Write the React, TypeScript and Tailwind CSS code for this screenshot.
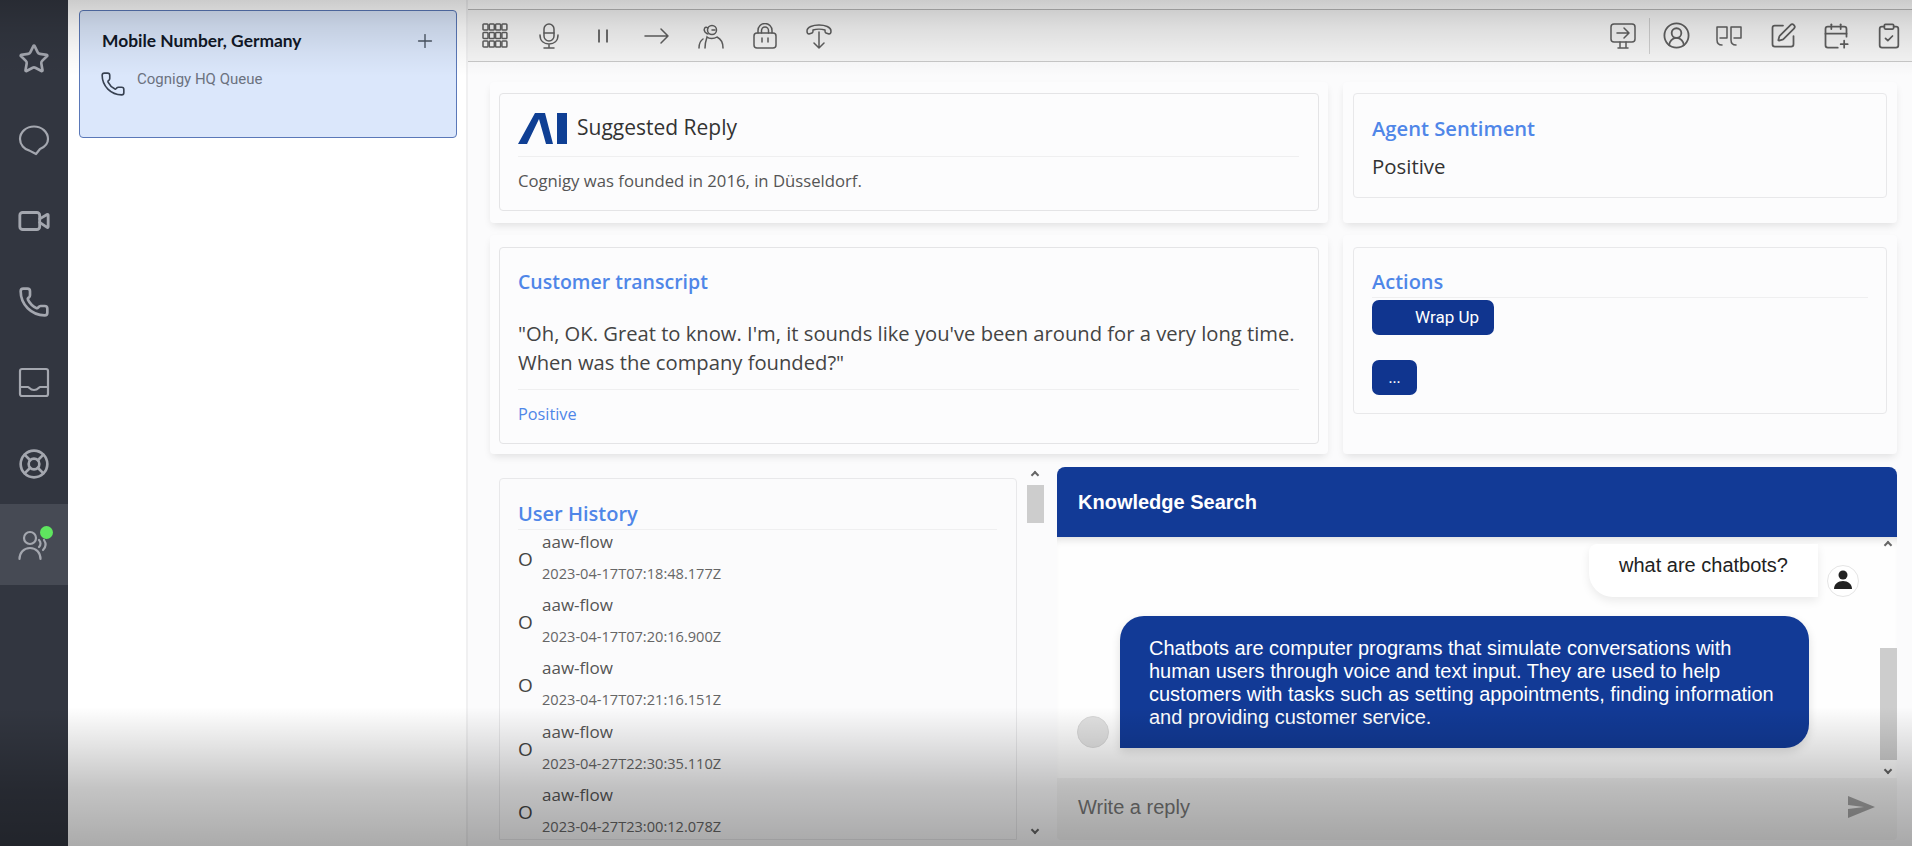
import {
  CalendarPlus,
  CircleUserRound,
  ClipboardCheck,
  LifeBuoy,
  Phone,
  Plus,
  SquarePen,
  Star,
  Video,
} from 'lucide-react';

const body = "font-['Open_Sans',sans-serif]";

const ChatIcon = () => (
  <svg width="32" height="32" viewBox="0 0 32 32" fill="none" stroke="currentColor" strokeWidth="2.2" strokeLinecap="round" strokeLinejoin="round">
    <path d="M16 2.5C8.3 2.5 2 7.9 2 15c0 5.6 4.3 10.6 9.5 11.6l6.5 3.4 4-5c4.8-2 8-5.6 8-10C30 7.9 23.7 2.5 16 2.5Z" />
  </svg>
);

const InboxIcon = () => (
  <svg width="32" height="32" viewBox="0 0 32 32" fill="none" stroke="currentColor" strokeWidth="2.2" strokeLinecap="round" strokeLinejoin="round">
    <rect x="2" y="2" width="28" height="27" rx="2" />
    <path d="M2 20h8c1 0 2 3 6 3s5-3 6-3h8" />
  </svg>
);

const AgentIcon = () => (
  <svg width="32" height="32" viewBox="0 0 32 32" fill="none" stroke="currentColor" strokeWidth="2.2" strokeLinecap="round">
    <circle cx="12" cy="9" r="6" />
    <path d="M1.5 30c0-6 4-11 10.5-11s10.500 5 10.500 11" />
    <path d="M21 11c2 2 2 5 0 7M26 11c2 3 2 7-1 10" />
  </svg>
);

const DialIcon = () => (
  <svg width="26" height="26" viewBox="0 0 26 26" fill="none" stroke="currentColor" strokeWidth="1.5">
    {[1, 7.3, 13.6, 19.9].map((x) =>
      [1, 9.5, 18].map((y) => <rect key={`${x}-${y}`} x={x} y={y} width="5" height="6" rx="0.8" />)
    )}
  </svg>
);

const MicIcon = () => (
  <svg width="26" height="26" viewBox="0 0 26 26" fill="none" stroke="currentColor" strokeWidth="1.5" strokeLinecap="round">
    <rect x="8" y="1" width="10" height="17" rx="5" />
    <path d="M8 10h10M4 12c0 6 4 9 9 9s9-3 9-9M13 21v4M8 25h10" />
  </svg>
);

const PauseIcon = () => (
  <svg width="26" height="26" viewBox="0 0 26 26" fill="none" stroke="currentColor" strokeWidth="1.8">
    <path d="M9 6.5v13M17 6.5v13" />
  </svg>
);

const ArrowIcon = () => (
  <svg width="26" height="26" viewBox="0 0 26 26" fill="none" stroke="currentColor" strokeWidth="1.5" strokeLinecap="round" strokeLinejoin="round">
    <path d="M1 13h23M17 6l7 7-7 7" />
  </svg>
);

const AgentsIcon = () => (
  <svg width="26" height="26" viewBox="0 0 26 26" fill="none" stroke="currentColor" strokeWidth="1.5" strokeLinecap="round">
    <circle cx="14" cy="7" r="4.5" />
    <path d="M10 5C7 3 5 6 7 9c1 1 2 2 3 2M14 7h3" />
    <path d="M1 25c0-4 1-7 4-9M25 25c0-5-2-9-6-11-3 2-8 2-10 0-1 3-2 7-2 11" />
  </svg>
);

const LockIcon = () => (
  <svg width="26" height="26" viewBox="0 0 26 26" fill="none" stroke="currentColor" strokeWidth="1.5" strokeLinecap="round">
    <rect x="2" y="10" width="22" height="15" rx="3" />
    <path d="M6 10V7.5a7 7 0 0 1 14 0V10M9.5 10V7.5a3.5 3.5 0 0 1 7 0V10M10 15v4M16 15v4" />
  </svg>
);

const TransferCallIcon = () => (
  <svg width="26" height="26" viewBox="0 0 26 26" fill="none" stroke="currentColor" strokeWidth="1.5" strokeLinecap="round" strokeLinejoin="round">
    <path d="M1 8c0-8 24-8 24 0 0 2-1 3-2 3l-3-1c-1 0-1-1-1-3-3-1-9-1-12 0 0 2 0 3-1 3l-3 1c-1 0-2-1-2-3Z" />
    <path d="M13 9v16M8 20l5 5 5-5" />
  </svg>
);

const ScreenIcon = () => (
  <svg width="26" height="26" viewBox="0 0 26 26" fill="none" stroke="currentColor" strokeWidth="1.5" strokeLinecap="round" strokeLinejoin="round">
    <rect x="1" y="1" width="24" height="18" rx="3" />
    <path d="M7 10h11M14 5l5 5-5 5M10 19v5M16 19v5M8 25h10" />
  </svg>
);

const QuoteIcon = () => (
  <svg width="26" height="26" viewBox="0 0 26 26" fill="none" stroke="currentColor" strokeWidth="1.5" strokeLinecap="round" strokeLinejoin="round" className="mr-[2px]">
    <path d="M1 4h10v11H4M1 4v13c0 3 2 5 5 5" />
    <path d="M15 4h10v11h-7M15 4v13c0 3 2 5 5 5" />
  </svg>
);

const AiLogo = () => (
  <svg width="50" height="32" viewBox="0 0 50 32" fill="#0f3f94">
    <polygon points="0,32 17,1 27,1 35,32 28,32 21,7 9,32" />
    <polygon points="39,1 49,1 49,32 39,32" />
  </svg>
);

const SendIcon = () => (
  <svg width="28" height="24" viewBox="0 0 28 24" fill="#a3a3a3">
    <path d="M1 1l27 11L1 23l0-9 16-2L1 10Z" />
  </svg>
);

const UserGlyph = () => (
  <svg width="22" height="24" viewBox="0 0 22 24" fill="#222">
    <circle cx="11" cy="6" r="4.5" />
    <path d="M2 20c0-5 4-8 9-8s9 3 9 8Z" />
  </svg>
);

const navIcons = [
  { key: 'star', node: <Star size={32} strokeWidth={2} /> },
  { key: 'chat', node: <ChatIcon /> },
  { key: 'video', node: <Video size={34} strokeWidth={2} /> },
  { key: 'phone', node: <Phone size={32} strokeWidth={2} /> },
  { key: 'inbox', node: <InboxIcon /> },
  { key: 'help', node: <LifeBuoy size={32} strokeWidth={2} /> },
];

const toolbarLeft = [
  <DialIcon key="dial" />,
  <MicIcon key="mic" />,
  <PauseIcon key="pause" />,
  <ArrowIcon key="arrow" />,
  <AgentsIcon key="agents" />,
  <LockIcon key="lock" />,
  <TransferCallIcon key="transfer" />,
];

const toolbarRight = [
  <CircleUserRound key="user" size={29} strokeWidth={1.5} />,
  <QuoteIcon key="quote" />,
  <SquarePen key="edit" size={28} strokeWidth={1.5} />,
  <CalendarPlus key="calendar" size={28} strokeWidth={1.5} />,
  <ClipboardCheck key="clipboard" size={28} strokeWidth={1.5} />,
];

const history = [
  '2023-04-17T07:18:48.177Z',
  '2023-04-17T07:20:16.900Z',
  '2023-04-17T07:21:16.151Z',
  '2023-04-27T22:30:35.110Z',
  '2023-04-27T23:00:12.078Z',
];

const Scrollbar = ({ thumbClass, heightClass }: { thumbClass: string; heightClass: string }) => (
  <div className={`relative w-[17px] shrink-0 ${heightClass}`}>
    <span className="absolute left-[4px] top-[3px] h-[6px] w-[6px] translate-x-[1px] translate-y-[2px] rotate-45 border-l-2 border-t-2 border-[#666]" />
    <div className={`absolute left-0 w-[17px] bg-[#cdcdcd] ${thumbClass}`} />
    <span className="absolute bottom-[3px] left-[4px] h-[6px] w-[6px] translate-x-[1px] -translate-y-[2px] rotate-45 border-b-2 border-r-2 border-[#666]" />
  </div>
);

export default function App() {
  return (
    <div className={`relative flex h-[846px] w-[1912px] overflow-hidden bg-white ${body}`}>
      {/* Nav rail */}
      <aside className="flex h-full w-[68px] shrink-0 flex-col items-center bg-[#323640] pt-[18px] text-[#a4a7af]">
        {navIcons.map((item) => (
          <div key={item.key} className="flex h-[81px] items-center justify-center">
            {item.node}
          </div>
        ))}
        <div className="relative flex h-[81px] w-full items-center justify-center bg-[#464a54]">
          <AgentIcon />
          <span className="absolute left-[40px] top-[22px] h-[13px] w-[13px] rounded-full bg-[#5fe65f]" />
        </div>
      </aside>

      {/* Queue column */}
      <section className="h-full w-[400px] shrink-0 border-r-2 border-[#f0f0f1] bg-white pl-[11px] pt-[10px]">
        <div className="h-[128px] w-[378px] rounded-[4px] border border-[#5a78b8] bg-[#dbe7fb] pl-[22px] pr-[20px]">
          <div className="flex items-center justify-between pt-[17px]">
            <span className="font-['Lato',sans-serif] text-[17.4px] font-bold leading-[26px] text-[#111827]">Mobile Number, Germany</span>
            <Plus size={22} strokeWidth={1.5} className="text-[#4b5563]" />
          </div>
          <div className="mt-[11px] flex items-start">
            <Phone size={26} strokeWidth={1.5} className="-ml-[2px] mt-[6px] text-[#374151]" />
            <span className="ml-[11px] mt-[4px] font-['Roboto',sans-serif] text-[15px] leading-[20px] text-[#6b7280]">Cognigy HQ Queue</span>
          </div>
        </div>
      </section>

      {/* Main */}
      <main className="flex h-full min-w-0 flex-1 flex-col bg-[#fbfbfc]">
        <div className="h-[10px] shrink-0 border-b border-[#b9b9b9] bg-white" />
        <div className="flex h-[52px] shrink-0 items-center justify-between border-b border-[#c9c9c9] bg-[#f6f6f6] pl-[14px] pr-[9px] text-[#5f5f5f]">
          <div className="flex items-center gap-[28px]">{toolbarLeft}</div>
          <div className="flex items-center">
            <ScreenIcon />
            <div className="ml-[13px] mr-[12px] h-[36px] w-px bg-[#cfcfcf]" />
            <div className="flex items-center gap-[25px]">{toolbarRight}</div>
          </div>
        </div>

        <div className="flex flex-col pl-[22px] pr-[15px] pt-[20px]">
          {/* Row 1 */}
          <div className="flex h-[141px] gap-[15px]">
            <div className="h-full w-[838px] rounded bg-[#fcfcfd] px-[9px] pt-[11px] shadow-[0_4px_8px_-2px_rgba(0,0,0,0.12)]">
              <div className="h-[118px] rounded border border-[#e4e4e6] pl-[18px] pr-[19px]">
                <div className="flex h-[63px] items-center gap-[9px] border-b border-[#efeff0] pt-[6px]">
                  <AiLogo />
                  <span className="text-[21px] font-medium text-[#333]">Suggested Reply</span>
                </div>
                <p className="mt-[13px] text-[16.7px] leading-[22px] text-[#555]">Cognigy was founded in 2016, in Düsseldorf.</p>
              </div>
            </div>
            <div className="h-full w-[554px] rounded bg-[#fcfcfd] pl-[10px] pr-[10px] pt-[11px] shadow-[0_4px_8px_-2px_rgba(0,0,0,0.12)]">
              <div className="h-[105px] rounded border border-[#e8e8ea] px-[18px] pt-[21px]">
                <h2 className="text-[20.2px] font-semibold leading-[26px] text-[#4f86e8]">Agent Sentiment</h2>
                <p className="mt-[12px] text-[20.4px] font-medium leading-[26px] text-[#333]">Positive</p>
              </div>
            </div>
          </div>

          {/* Row 2 */}
          <div className="mt-[12px] flex h-[219px] gap-[15px]">
            <div className="h-full w-[838px] rounded bg-[#fcfcfd] px-[9px] pt-[12px] shadow-[0_4px_8px_-2px_rgba(0,0,0,0.12)]">
              <div className="h-[197px] rounded border border-[#e4e4e6] pl-[18px] pr-[19px] pt-[20px]">
                <h2 className="text-[19.5px] font-semibold leading-[28px] text-[#4f86e8]">Customer transcript</h2>
                <p className="mt-[23px] text-[20.2px] leading-[29px] text-[#444]">
                  "Oh, OK. Great to know. I'm, it sounds like you've been around for a very long time. When was the company founded?"
                </p>
                <div className="mt-[12px] border-t border-[#efeff0] pt-[13px] text-[16.3px] font-medium leading-[22px] text-[#4f86e8]">Positive</div>
              </div>
            </div>
            <div className="h-full w-[554px] rounded bg-[#fcfcfd] pl-[10px] pr-[10px] pt-[12px] shadow-[0_4px_8px_-2px_rgba(0,0,0,0.12)]">
              <div className="h-[167px] rounded border border-[#e8e8ea] px-[18px] pt-[21px]">
                <h2 className="border-b border-[#efeff0] pb-[2px] text-[20px] font-semibold leading-[26px] text-[#4f86e8]">Actions</h2>
                <button className="mt-[2px] flex h-[35px] w-[122px] items-center justify-end rounded-[7px] bg-[#10358f] pr-[15px] font-['Roboto',sans-serif] text-[17px] text-white">Wrap Up</button>
                <button className="mt-[25px] block h-[35px] w-[45px] rounded-[7px] bg-[#10358f] text-[15px] text-white">...</button>
              </div>
            </div>
          </div>

          {/* Row 3 */}
          <div className="mt-[13px] flex h-[379px]">
            <div className="flex h-full w-[554px] shrink-0 items-start gap-[10px] pl-[9px]">
              <div className="mt-[11px] h-[362px] w-[518px] overflow-hidden rounded-t border border-[#e8e8ea] pl-[18px] pr-[19px] pt-[22px]">
                <h2 className="border-b border-[#efeff0] pb-[2px] text-[20px] font-semibold leading-[26px] text-[#4f86e8]">User History</h2>
                <ul className="-mt-[5px]">
                  {history.map((stamp) => (
                    <li key={stamp} className="flex h-[63.2px] items-center">
                      <span className="mt-[6px] w-[24px] text-[19px] leading-none text-[#444]">O</span>
                      <div className="flex flex-col">
                        <span className="text-[17px] leading-[24px] text-[#555]">aaw-flow</span>
                        <span className="mt-[9px] text-[14.6px] leading-[20px] text-[#666]">{stamp}</span>
                      </div>
                    </li>
                  ))}
                </ul>
              </div>
              <Scrollbar thumbClass="top-[18px] h-[38px]" heightClass="h-[371px]" />
            </div>

            <div className="ml-[13px] flex h-full w-[840px] shrink-0 flex-col">
              <div className="flex h-[70px] shrink-0 items-center rounded-t-lg bg-[#123a96] pl-[21px] font-['Liberation_Sans',sans-serif] text-[20px] font-bold text-white">
                Knowledge Search
              </div>
              <div className="flex h-[241px] shrink-0 bg-[#fefefe] font-['Liberation_Sans',sans-serif] shadow-[inset_0_8px_8px_-6px_rgba(0,0,0,0.15)]">
                <div className="flex min-w-0 flex-1 flex-col pl-[20px] pr-[21px] pt-[7px]">
                  <div className="flex items-end justify-end gap-[9px]">
                    <div className="flex h-[53px] w-[229px] items-start rounded-bl-3xl rounded-tl-lg bg-white pl-[30px] pt-[10px] text-[20px] leading-[22px] text-[#222] shadow-[0_4px_10px_rgba(0,0,0,0.08)]">
                      what are chatbots?
                    </div>
                    <div className="flex h-[32px] w-[32px] items-center justify-center rounded-full border border-[#e5e5e5] bg-white">
                      <UserGlyph />
                    </div>
                  </div>
                  <div className="mt-[19px] flex items-end gap-[11px]">
                    <div className="h-[32px] w-[32px] shrink-0 rounded-full border border-[#d8d8d8] bg-[#e2e2e2]" />
                    <div className="h-[132px] w-[689px] rounded-[24px] rounded-bl-none bg-[#123a96] pl-[29px] pr-[30px] pt-[21px] text-[20px] leading-[23px] text-white shadow-[0_4px_10px_rgba(0,0,0,0.12)]">
                      Chatbots are computer programs that simulate conversations with human users through voice and text input. They are used to help customers with tasks such as setting appointments, finding information and providing customer service.
                    </div>
                  </div>
                </div>
                <Scrollbar thumbClass="top-[111px] h-[112px]" heightClass="h-full" />
              </div>
              <div className="flex h-[62px] shrink-0 items-center justify-between rounded-b bg-[#f4f4f4] pb-[5px] pl-[21px] pr-[22px] font-['Liberation_Sans',sans-serif] text-[20px] text-[#777]">
                <span>Write a reply</span>
                <SendIcon />
              </div>
            </div>
          </div>
        </div>
      </main>

      {/* Video player scrims over the capture */}
      <div className="pointer-events-none absolute inset-x-0 top-0 h-[76px] bg-[linear-gradient(to_bottom,rgba(0,0,0,0.2),rgba(0,0,0,0.1)_35%,rgba(0,0,0,0.04)_70%,rgba(0,0,0,0))]" />
      <div className="pointer-events-none absolute inset-x-0 bottom-0 h-[139px] bg-[linear-gradient(to_bottom,rgba(0,0,0,0),rgba(0,0,0,0.13)_33%,rgba(0,0,0,0.23)_58%,rgba(0,0,0,0.33))]" />
    </div>
  );
}
